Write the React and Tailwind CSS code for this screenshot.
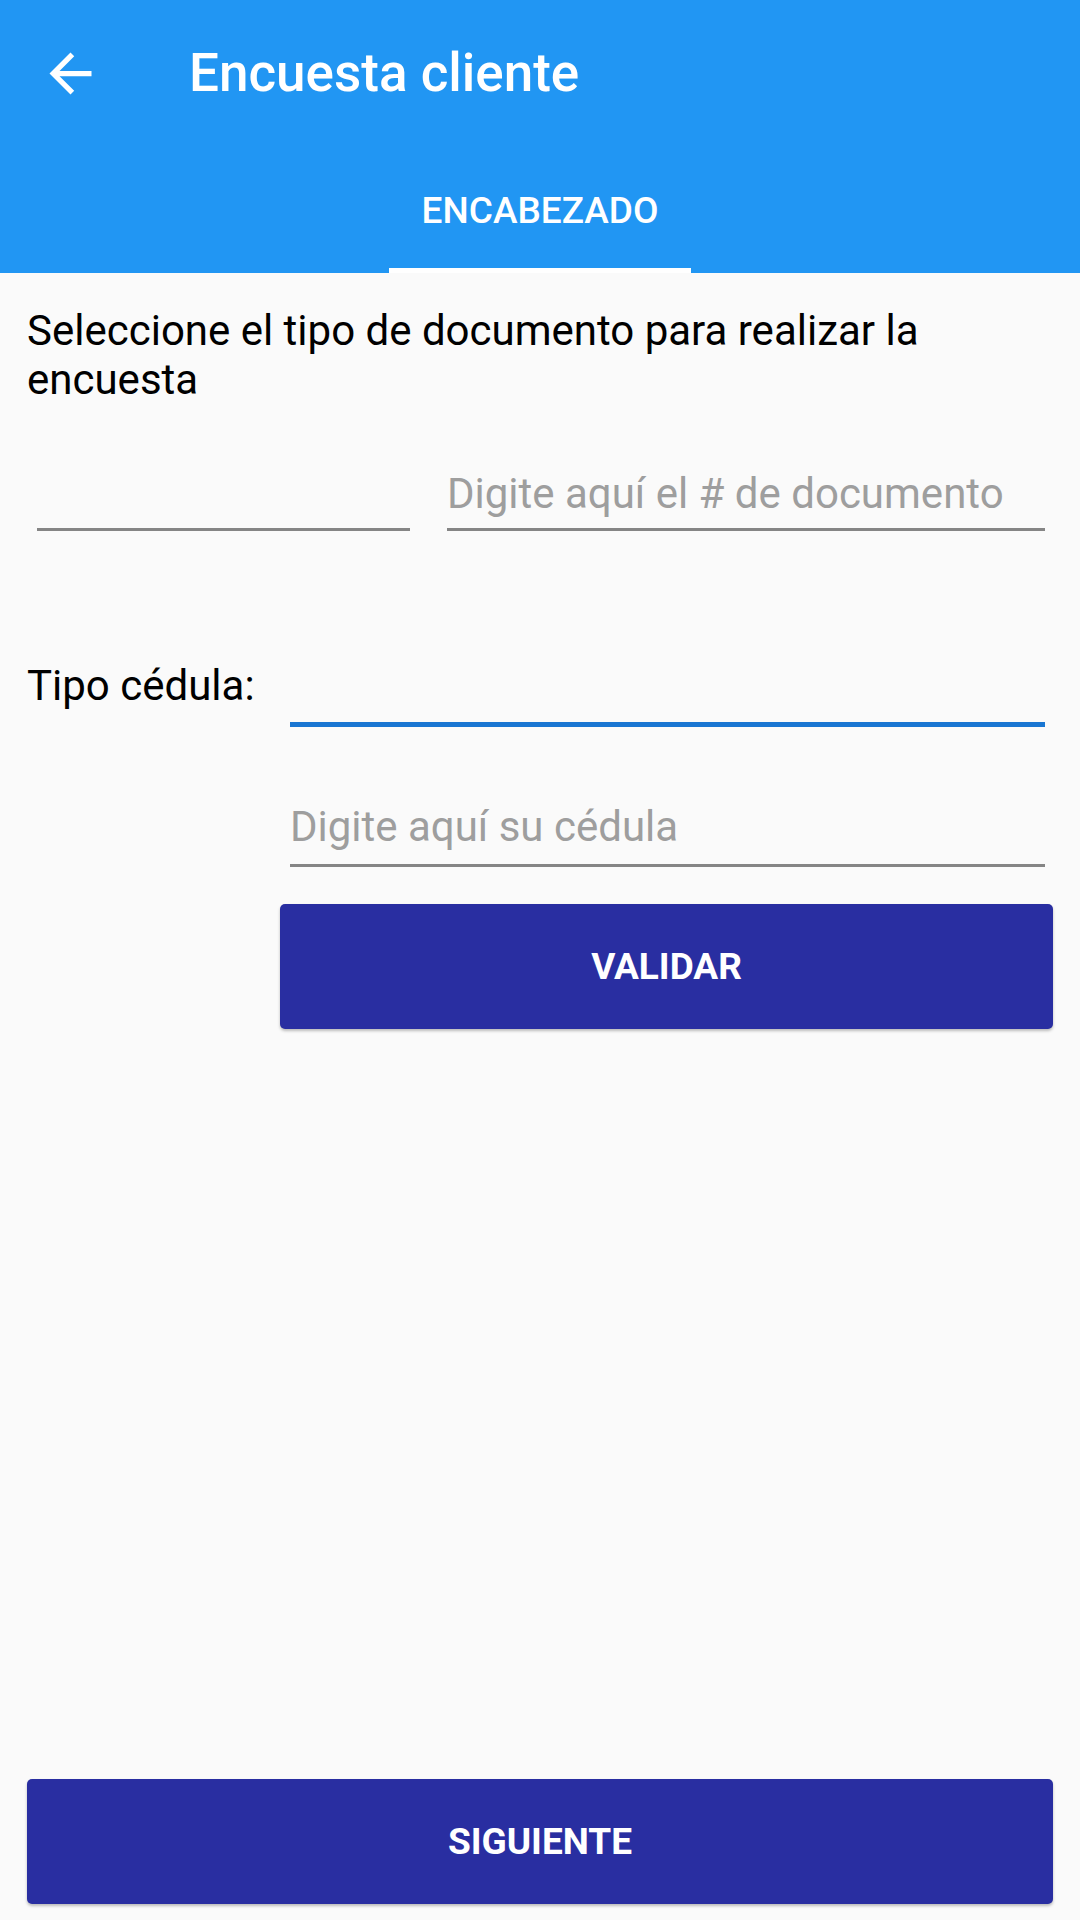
function BackArrow() {
  return (
    <svg viewBox="0 0 24 24" className="w-[63px] h-[63px]" fill="#ffffff">
      <path d="M20 11H7.83l5.59-5.59L12 4l-8 8 8 8 1.41-1.41L7.83 13H20v-2z" />
    </svg>
  );
}

function UnderlineInput({ placeholder, className = '' }) {
  return (
    <div className={`border-b-[3px] border-[#858585] ${className}`}>
      <p className="text-[42px] leading-[49px] text-[#9e9e9e] whitespace-nowrap">{placeholder || '\u00a0'}</p>
    </div>
  );
}

export default function App() {
  return (
    <div className="w-[1080px] h-[1920px] bg-[#fafafa] flex flex-col font-['Roboto',sans-serif]">
      {/* App bar + tabs */}
      <div className="bg-[#2196f3] h-[273px] flex flex-col shrink-0">
        <div className="h-[147px] flex items-center pl-[39px]">
          <BackArrow />
          <h1 className="ml-[87px] text-[53px] font-medium text-white leading-none">Encuesta cliente</h1>
        </div>
        <div className="h-[126px] flex justify-center">
          <div className="w-[302px] flex flex-col">
            <div className="flex-1 flex items-center justify-center pt-[7px] text-[37px] font-medium text-white">
              ENCABEZADO
            </div>
            <div className="h-[5px] bg-white" />
          </div>
        </div>
      </div>

      {/* Form */}
      <div className="flex-1 flex flex-col px-[27px] pt-[33px] pb-[16px]">
        <p className="text-[42px] leading-[49px] text-black">
          Seleccione el tipo de documento para realizar la encuesta
        </p>

        <div className="flex mt-[65px] pl-[10px]">
          <UnderlineInput className="w-[373px] pb-[10px]" />
          <UnderlineInput className="w-[598px] ml-[37px] pb-[10px]" placeholder="Digite aquí el # de documento" />
        </div>

        <div className="flex mt-[110px] pr-[8px]">
          <p className="w-[263px] shrink-0 mt-[20px] text-[42px] leading-[49px] text-black">Tipo cédula:</p>
          <div className="flex-1 h-[86px] border-b-[5px] border-[#1976d2]" />
        </div>

        <div className="flex mt-[75px] pl-[263px] pr-[8px]">
          <UnderlineInput className="flex-1 pb-[13px]" placeholder="Digite aquí su cédula" />
        </div>

        <div className="flex mt-[37px] pl-[253px] pr-[-1px]">
          <button className="flex-1 h-[125px] rounded-[5px] bg-[#292ea1] text-white text-[37px] font-bold shadow-[0_2px_3px_rgba(0,0,0,0.25)]">
            VALIDAR
          </button>
        </div>

        <div className="flex-1" />

        <button className="h-[125px] rounded-[5px] bg-[#292ea1] text-white text-[37px] font-bold shadow-[0_2px_3px_rgba(0,0,0,0.25)]">
          SIGUIENTE
        </button>
      </div>
    </div>
  );
}
